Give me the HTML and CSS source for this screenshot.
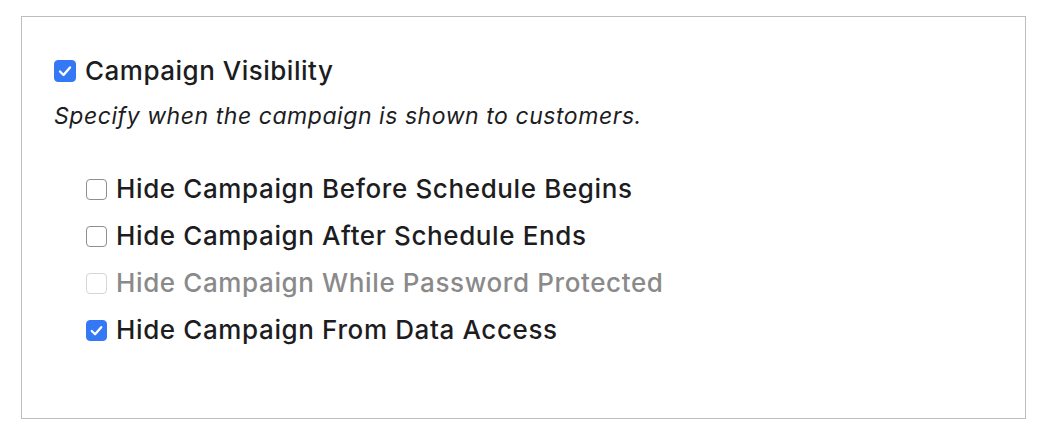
FILE: index.html
```html
<!DOCTYPE html>
<html>
<head>
<meta charset="utf-8">
<link rel="stylesheet" href="styles.css">
</head>
<body>
<div class="panel">
  <label class="title-row">
    <span class="box checked"><svg viewBox="0 0 20 20"><path d="M5 10.5 L8.5 14 L15 6.5" fill="none" stroke="#fff" stroke-width="2.4" stroke-linecap="round" stroke-linejoin="round"/></svg></span>
    <span class="title">Campaign Visibility</span>
  </label>
  <p class="desc">Specify when the campaign is shown to customers.</p>
  <ul class="options">
    <li class="opt"><span class="box"></span><span>Hide Campaign Before Schedule Begins</span></li>
    <li class="opt"><span class="box"></span><span>Hide Campaign After Schedule Ends</span></li>
    <li class="opt disabled"><span class="box"></span><span>Hide Campaign While Password Protected</span></li>
    <li class="opt"><span class="box checked"><svg viewBox="0 0 20 20"><path d="M5 10.5 L8.5 14 L15 6.5" fill="none" stroke="#fff" stroke-width="2.4" stroke-linecap="round" stroke-linejoin="round"/></svg></span><span>Hide Campaign From Data Access</span></li>
  </ul>
</div>
</body>
</html>
```
FILE: styles.css
```css
html, body { margin: 0; padding: 0; background: #fff; }
body {
  font-family: Inter, "Noto Sans", sans-serif;
  color: #1d1d1f;
  padding: 16px 22px 17px 21px;
}
.panel {
  border: 1px solid #bdbdbd;
  height: 403px;
  box-sizing: border-box;
  padding: 39px 32px 0 32px;
}
.title-row {
  display: flex;
  align-items: center;
  gap: 9px;
}
.box {
  width: 21px;
  height: 21px;
  box-sizing: border-box;
  border: 1px solid #8e8e93;
  border-radius: 4px;
  background: #fff;
  flex: none;
  display: flex;
  align-items: center;
  justify-content: center;
}
.box svg { width: 21px; height: 21px; display: block; }
.box.checked { background: #3478f6; border-color: #3478f6; }
.title-row .box { width: 22px; height: 22px; }
.title-row .box svg { width: 22px; height: 22px; }
.title {
  font-size: 26px;
  line-height: 30px;
  font-weight: 500;
  letter-spacing: 0.5px;
}
.desc {
  margin: 16px 0 0 0;
  font-size: 23px;
  font-style: italic;
  line-height: 28px;
  letter-spacing: 0.55px;
}
.options {
  list-style: none;
  margin: 44px 0 0 32px;
  padding: 0;
  display: flex;
  flex-direction: column;
  gap: 17px;
}
.opt {
  display: flex;
  align-items: center;
  gap: 9px;
  font-size: 26px;
  line-height: 30px;
  font-weight: 500;
  letter-spacing: 0.62px;
}
.opt.disabled { color: #8a8a8a; }
.opt.disabled .box { border-color: #d6d6d6; }
```
